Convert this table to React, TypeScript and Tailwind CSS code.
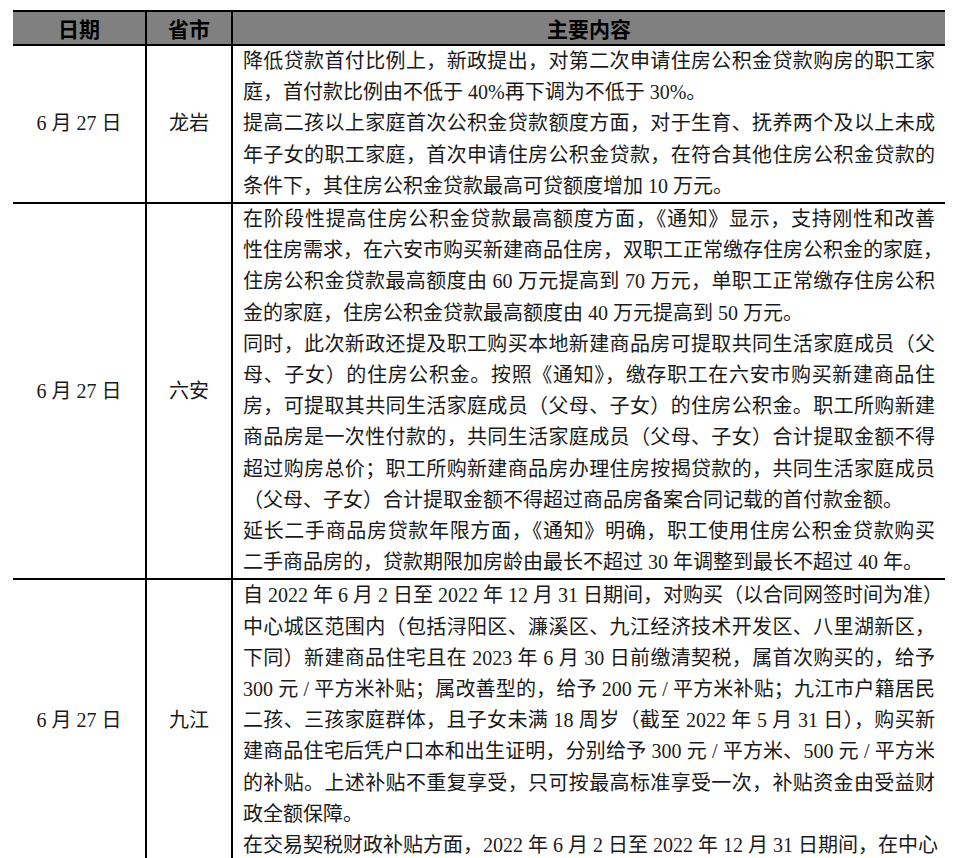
const rows = [
  {
    date: "6 月 27 日",
    city: "龙岩",
    paras: [
      [
        "降低贷款首付比例上，新政提出，对第二次申请住房公积金贷款购房的职工家",
        "庭，首付款比例由不低于 40%再下调为不低于 30%。",
      ],
      [
        "提高二孩以上家庭首次公积金贷款额度方面，对于生育、抚养两个及以上未成",
        "年子女的职工家庭，首次申请住房公积金贷款，在符合其他住房公积金贷款的",
        "条件下，其住房公积金贷款最高可贷额度增加 10 万元。",
      ],
    ],
  },
  {
    date: "6 月 27 日",
    city: "六安",
    paras: [
      [
        "在阶段性提高住房公积金贷款最高额度方面，《通知》显示，支持刚性和改善",
        "性住房需求，在六安市购买新建商品住房，双职工正常缴存住房公积金的家庭，",
        "住房公积金贷款最高额度由 60 万元提高到 70 万元，单职工正常缴存住房公积",
        "金的家庭，住房公积金贷款最高额度由 40 万元提高到 50 万元。",
      ],
      [
        "同时，此次新政还提及职工购买本地新建商品房可提取共同生活家庭成员（父",
        "母、子女）的住房公积金。按照《通知》，缴存职工在六安市购买新建商品住",
        "房，可提取其共同生活家庭成员（父母、子女）的住房公积金。职工所购新建",
        "商品房是一次性付款的，共同生活家庭成员（父母、子女）合计提取金额不得",
        "超过购房总价；职工所购新建商品房办理住房按揭贷款的，共同生活家庭成员",
        "（父母、子女）合计提取金额不得超过商品房备案合同记载的首付款金额。",
      ],
      [
        "延长二手商品房贷款年限方面，《通知》明确，职工使用住房公积金贷款购买",
        "二手商品房的，贷款期限加房龄由最长不超过 30 年调整到最长不超过 40 年。",
      ],
    ],
  },
  {
    date: "6 月 27 日",
    city: "九江",
    paras: [
      [
        "自 2022 年 6 月 2 日至 2022 年 12 月 31 日期间，对购买（以合同网签时间为准）",
        "中心城区范围内（包括浔阳区、濂溪区、九江经济技术开发区、八里湖新区，",
        "下同）新建商品住宅且在 2023 年 6 月 30 日前缴清契税，属首次购买的，给予",
        "300 元 / 平方米补贴；属改善型的，给予 200 元 / 平方米补贴；九江市户籍居民",
        "二孩、三孩家庭群体，且子女未满 18 周岁（截至 2022 年 5 月 31 日），购买新",
        "建商品住宅后凭户口本和出生证明，分别给予 300 元 / 平方米、500 元 / 平方米",
        "的补贴。上述补贴不重复享受，只可按最高标准享受一次，补贴资金由受益财",
        "政全额保障。",
      ],
      [
        "在交易契税财政补贴方面，2022 年 6 月 2 日至 2022 年 12 月 31 日期间，在中心",
        "",
      ],
    ],
  },
];

function Paragraph({ lines }: { lines: string[] }) {
  return (
    <div>
      {lines.map((line, i) =>
        line === "" ? null : (
          <div
            key={i}
            className={
              i < lines.length - 1
                ? "whitespace-nowrap text-justify [text-align-last:justify]"
                : "whitespace-nowrap text-left"
            }
          >
            {line}
          </div>
        )
      )}
    </div>
  );
}

export default function App() {
  return (
    <div className="min-h-screen bg-white pt-[10px] font-['Liberation_Serif','Noto_Sans_CJK_SC',serif] text-[20px] leading-[31.2px] text-[#1a1a1a]">
      <div className="ml-[13px] w-[932px]">
        {/* header */}
        <div className="flex h-[36px] border-y-2 border-black bg-[#808080] font-['Noto_Sans_CJK_SC',sans-serif] text-[21px] font-bold leading-none text-black">
          <div className="flex w-[134px] items-center justify-center border-r-2 border-black">
            日期
          </div>
          <div className="flex w-[86px] items-center justify-center border-r-2 border-black">
            省市
          </div>
          <div className="flex flex-1 items-center justify-center">主要内容</div>
        </div>

        {rows.map((row, idx) => (
          <div
            key={idx}
            className={
              idx < rows.length - 1
                ? "flex border-b-2 border-black"
                : "flex"
            }
          >
            <div className="flex w-[134px] items-center justify-center border-r-2 border-black">
              {row.date}
            </div>
            <div className="flex w-[86px] items-center justify-center border-r-2 border-black">
              {row.city}
            </div>
            <div className="min-w-0 flex-1 px-[10px]">
              {row.paras.map((p, j) => (
                <Paragraph key={j} lines={p} />
              ))}
            </div>
          </div>
        ))}
      </div>
    </div>
  );
}
